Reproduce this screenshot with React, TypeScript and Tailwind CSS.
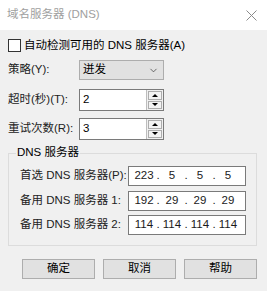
import { ChevronDown } from 'lucide-react';

const font = "font-['Liberation_Sans','Noto_Sans_CJK_SC',sans-serif]";

const IpBox = ({ parts }: { parts: string[] }) => (
  <div className="flex h-[20px] w-[118px] items-center border border-[#7a7a7a] bg-white pl-[3px] text-[#1a1a1a]">
    {parts.map((p, i) => (
      <div key={i} className="flex items-center">
        {i > 0 && <span className="w-[4px] text-center">.</span>}
        <span className="w-[24px] text-center">{p}</span>
      </div>
    ))}
  </div>
);

const Spin = ({ value }: { value: string }) => (
  <div className="flex h-[22px] w-[85px] border border-[#7a7a7a] bg-white">
    <div className="flex flex-1 items-center pl-[3px]">{value}</div>
    <div className="flex w-[17px] flex-col gap-[1px] border-l border-[#bdbdbd] bg-[#f0f0f0] p-[1px]">
      <div className="flex flex-1 items-center justify-center border border-[#adadad] bg-[#f3f3f3]">
        <div className="h-0 w-0 border-x-[3px] border-b-[3px] border-x-transparent border-b-black" />
      </div>
      <div className="flex flex-1 items-center justify-center border border-[#adadad] bg-[#f3f3f3]">
        <div className="h-0 w-0 border-x-[3px] border-t-[3px] border-x-transparent border-t-black" />
      </div>
    </div>
  </div>
);

export default function App() {
  return (
    <div className={`${font} h-[291px] w-[267px] whitespace-nowrap bg-[#f0f0f0] text-[11.5px] leading-none text-black`}>
      {/* title bar */}
      <div className="flex h-[30px] items-center justify-between bg-white pl-[7px] pr-[10px]">
        <span className="text-[#a0a0a0]">域名服务器 (DNS)</span>
        <svg width="11" height="11" viewBox="0 0 11 11" stroke="#8a8a8a" strokeWidth="1">
          <path d="M0.5 0.5l10 10M10.5 0.5l-10 10" />
        </svg>
      </div>

      <div className="flex flex-col px-[8px] pt-[9px]">
        <label className="flex items-center gap-[3px]">
          <span className="h-[13px] w-[13px] border border-[#333333] bg-white" />
          <span>自动检测可用的 DNS 服务器(A)</span>
        </label>

        <div className="mt-[8px] flex items-center">
          <span className="w-[71px] text-[#222222]">策略(Y):</span>
          <div className="flex h-[20px] w-[85px] items-center justify-between border border-[#adadad] bg-[#e1e1e1] pl-[3px] pr-[4px]">
            <span>迸发</span>
            <ChevronDown size={11} strokeWidth={1.5} color="#333" />
          </div>
        </div>

        <div className="mt-[9px] flex items-center">
          <span className="w-[71px] text-[#222222]">超时(秒)(T):</span>
          <Spin value="2" />
        </div>

        <div className="mt-[7px] flex items-center">
          <span className="w-[71px] text-[#222222]">重试次数(R):</span>
          <Spin value="3" />
        </div>

        {/* group box */}
        <div className="relative mt-[13px] h-[93px] w-[249px] border border-[#dcdcdc] pl-[11px] pt-[12px]">
          <span className="absolute -top-[7px] left-[7px] bg-[#f0f0f0] px-[1px]">DNS 服务器</span>
          <div className="flex flex-col gap-[5px]">
            <div className="flex items-center">
              <span className="w-[108px] text-[#222222]">首选 DNS 服务器(P):</span>
              <IpBox parts={['223', '5', '5', '5']} />
            </div>
            <div className="flex items-center">
              <span className="w-[108px] text-[#222222]">备用 DNS 服务器 1:</span>
              <IpBox parts={['192', '29', '29', '29']} />
            </div>
            <div className="-mt-[1px] flex items-center">
              <span className="w-[108px] text-[#222222]">备用 DNS 服务器 2:</span>
              <IpBox parts={['114', '114', '114', '114']} />
            </div>
          </div>
        </div>

        <div className="mt-[13px] flex gap-[8px] pl-[14px]">
          {['确定', '取消', '帮助'].map((t) => (
            <button key={t} className="flex h-[20px] w-[73px] items-center justify-center border border-[#adadad] bg-[#e1e1e1]">
              {t}
            </button>
          ))}
        </div>
      </div>
    </div>
  );
}
